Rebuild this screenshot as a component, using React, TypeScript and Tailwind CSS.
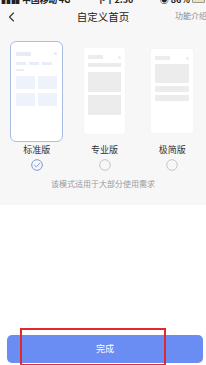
import React, { useState } from 'react';

const font = { fontFamily: '"Noto Sans CJK SC", "Noto Sans", sans-serif' };

type Mode = 'standard' | 'pro' | 'simple';

const StandardPreview = () => (
  <div className="flex h-full w-full flex-col rounded-[4px] bg-white px-[3px] pt-[8px]">
    <div className="flex items-center justify-between">
      <div className="h-[4px] w-[15px] bg-[#e6ebf5]" />
      <div className="h-[3px] w-[3px] rounded-full bg-[#e6ebf5]" />
    </div>
    <div className="mt-[6px] flex gap-[3px]">
      <div className="h-[3px] w-[10px] bg-[#e8edf7]" />
      <div className="h-[3px] w-[10px] bg-[#e8edf7]" />
      <div className="h-[3px] w-[10px] bg-[#e8edf7]" />
    </div>
    <div className="mt-[4px] h-[2px] w-[8px] bg-[#e8edf7]" />
    <div className="mt-[5px] grid grid-cols-2 gap-x-[3px] gap-y-[4px]">
      <div className="h-[13px] bg-[#eef2fb]" />
      <div className="h-[13px] bg-[#eef2fb]" />
      <div className="h-[13px] bg-[#eef2fb]" />
      <div className="h-[13px] bg-[#eef2fb]" />
    </div>
  </div>
);

const ProPreview = () => (
  <div className="flex h-[86px] w-[41px] flex-col rounded-[3px] bg-white px-[4px] pt-[7px] shadow-[0_0_2px_rgba(0,0,0,0.04)]">
    <div className="flex items-center justify-between">
      <div className="h-[4px] w-[15px] bg-[#ececec]" />
      <div className="h-[3px] w-[3px] rounded-full bg-[#ececec]" />
    </div>
    <div className="mt-[4px] h-[4px] bg-[#ececec]" />
    <div className="mt-[5px] h-[20px] bg-[#ececec]" />
    <div className="mt-[3px] h-[20px] bg-[#ececec]" />
  </div>
);

const SimplePreview = () => (
  <div className="flex h-[84px] w-[42px] flex-col rounded-[3px] bg-white px-[4px] pt-[7px] shadow-[0_0_2px_rgba(0,0,0,0.04)]">
    <div className="flex items-center justify-between">
      <div className="h-[4px] w-[15px] bg-[#ececec]" />
      <div className="h-[3px] w-[3px] rounded-full bg-[#ececec]" />
    </div>
    <div className="mt-[4px] h-[19px] bg-[#ececec]" />
    <div className="mt-[3px] h-[6px] bg-[#ececec]" />
    <div className="mt-[3px] h-[6px] bg-[#ececec]" />
  </div>
);

const Radio = ({ checked }: { checked: boolean }) =>
  checked ? (
    <svg width="12" height="12" viewBox="0 0 12 12">
      <circle cx="6" cy="6" r="5.3" fill="none" stroke="#6f8fd8" strokeWidth="0.9" />
      <path d="M3.4 6.1 L5.3 7.9 L8.7 4.4" fill="none" stroke="#6f8fd8" strokeWidth="0.9" strokeLinecap="round" strokeLinejoin="round" />
    </svg>
  ) : (
    <svg width="12" height="12" viewBox="0 0 12 12">
      <circle cx="6" cy="6" r="5.3" fill="none" stroke="#b8b8b8" strokeWidth="0.8" />
    </svg>
  );

export default function App() {
  const [mode, setMode] = useState<Mode>('standard');

  const options: { key: Mode; label: string }[] = [
    { key: 'standard', label: '标准版' },
    { key: 'pro', label: '专业版' },
    { key: 'simple', label: '极简版' },
  ];

  return (
    <div className="flex h-[365px] w-[206px] flex-col overflow-hidden bg-white" style={font}>
      <div className="flex h-[205px] flex-col bg-[#f7f7f7]">
        {/* status bar, cut off at the top */}
        <div className="relative h-[4px] overflow-hidden text-[9px] leading-none text-[#222]">
          <div className="absolute left-0 top-[-5px] flex w-full items-center justify-between px-[1px]">
            <span className="font-semibold tracking-tight">▮▮▮▮ 中国移动 4G</span>
            <span className="font-semibold">下午2:30</span>
            <span className="flex items-center gap-[2px] font-semibold">
              ◉ 86%
              <span className="inline-block h-[7px] w-[13px] rounded-[1px] border border-[#999] bg-[#e9e4b0]" />
            </span>
          </div>
        </div>

        {/* nav bar */}
        <div className="relative flex h-[26px] items-center justify-center">
          <svg className="absolute left-[8px] top-[8px]" width="7" height="10" viewBox="0 0 7 10">
            <path d="M5.5 1 L1.5 5 L5.5 9" fill="none" stroke="#333" strokeWidth="1.1" strokeLinecap="round" strokeLinejoin="round" />
          </svg>
          <span className="text-[10.5px] leading-none text-[#222]">自定义首页</span>
          <span className="absolute left-[175px] top-[8px] whitespace-nowrap text-[8px] leading-none text-[#888]">功能介绍</span>
        </div>

        {/* options */}
        <div className="mt-[10px] flex pl-[3px]">
          {options.map((o) => (
            <button
              key={o.key}
              type="button"
              onClick={() => setMode(o.key)}
              className="flex w-[68px] flex-col items-center"
            >
              <div className="flex h-[102px] items-center justify-center">
                {o.key === 'standard' ? (
                  <div className="h-[101px] w-[53px] rounded-[6px] border border-[#a8bde3] bg-white p-[2px]">
                    <StandardPreview />
                  </div>
                ) : o.key === 'pro' ? (
                  <ProPreview />
                ) : (
                  <SimplePreview />
                )}
              </div>
              <span className="mt-[2px] text-[9px] leading-[12px] text-[#333]">{o.label}</span>
              <div className="mt-[3px] flex">
                <Radio checked={mode === o.key} />
              </div>
            </button>
          ))}
        </div>

        <div className="mt-[9px] text-center text-[8px] leading-none text-[#9a9a9a]">
          该模式适用于大部分使用需求
        </div>
      </div>

      <div className="flex-1" />

      {/* bottom button */}
      <div className="relative px-[7px] pb-[2px] pr-[3px]">
        <button
          type="button"
          className="flex h-[28px] w-full items-center justify-center rounded-[5px] bg-[#6a8df4] text-[9px] text-white"
        >
          完成
        </button>
        <div className="pointer-events-none absolute left-[20px] top-[-7px] h-[38px] w-[146px] border-2 border-[#e0282d]" />
      </div>
    </div>
  );
}
